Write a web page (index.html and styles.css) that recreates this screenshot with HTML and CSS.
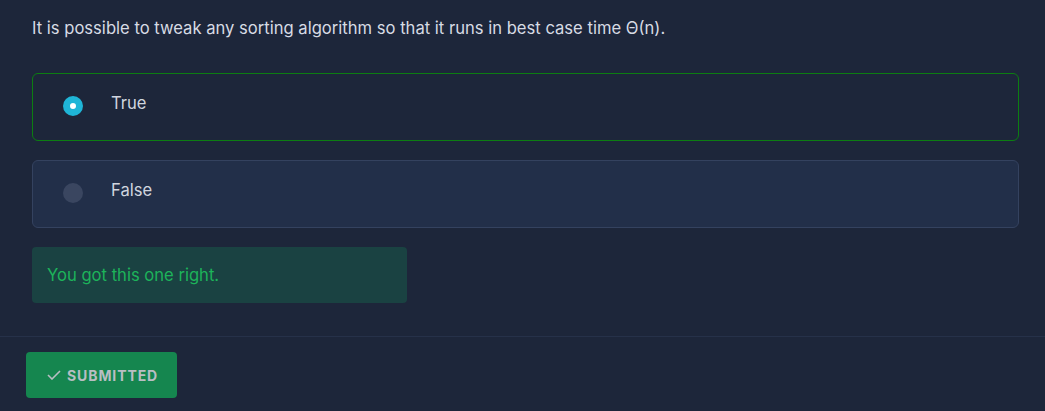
FILE: index.html
```html
<!DOCTYPE html>
<html>
<head>
<meta charset="utf-8">
<link rel="stylesheet" href="styles.css">
</head>
<body>
<div class="question">
  <p class="prompt">It is possible to tweak any sorting algorithm so that it runs in best case time Θ(n).</p>
  <div class="options">
    <label class="option option-correct">
      <span class="radio radio-on"></span>
      <span class="label">True</span>
    </label>
    <label class="option option-idle">
      <span class="radio radio-off"></span>
      <span class="label">False</span>
    </label>
  </div>
  <div class="feedback">You got this one right.</div>
</div>
<div class="footer">
  <button class="submit">
    <svg class="check" width="14" height="10" viewBox="0 0 14 10"><path d="M1 5 L5 9 L13 1" fill="none" stroke="currentColor" stroke-width="1.6"/></svg>
    <span>SUBMITTED</span>
  </button>
</div>
</body>
</html>
```
FILE: styles.css
```css
html, body {
  margin: 0;
  padding: 0;
  background: #1d263a;
  height: 100%;
}
body {
  font-family: Inter, "Noto Sans", sans-serif;
  color: #d5d9e2;
}
.question {
  padding: 16px 26px 33px 32px;
}
.prompt {
  margin: 0 0 33px 0;
  font-size: 16.6px;
  line-height: 24px;
  color: #d7dbe4;
}
.options {
  display: flex;
  flex-direction: column;
  gap: 19px;
}
.option {
  display: flex;
  align-items: center;
  height: 68px;
  box-sizing: border-box;
  border-radius: 6px;
  padding-left: 30px;
}
.option-correct {
  border: 1px solid #0c7d12;
  background: #1d263a;
}
.option-idle {
  border: 1px solid #34425f;
  background: #222f49;
}
.radio {
  width: 20px;
  height: 20px;
  border-radius: 50%;
  box-sizing: border-box;
  margin-right: 28px;
  margin-top: -2px;
}
.radio-on {
  border: 7px solid #1fb5d7;
  background: #ffffff;
}
.radio-off {
  background: #3a4660;
}
.label {
  font-size: 16.6px;
  color: #d0d5df;
  margin-bottom: 9px;
}
.feedback {
  margin-top: 19px;
  width: 375px;
  height: 56px;
  box-sizing: border-box;
  background: #1a4242;
  border-radius: 4px;
  color: #1db35a;
  font-size: 16.6px;
  display: flex;
  align-items: center;
  padding-left: 15px;
}
.footer {
  border-top: 1px solid #263149;
  padding: 15px 26px;
}
.submit {
  display: flex;
  align-items: center;
  gap: 6px;
  height: 46px;
  width: 151px;
  box-sizing: border-box;
  padding: 0 0 0 21px;
  border: none;
  border-radius: 4px;
  background: #15864f;
  color: #b9bec3;
  font-family: Inter, "Noto Sans", sans-serif;
  font-weight: 700;
  font-size: 14px;
  letter-spacing: 0.9px;
}
.check {
  color: #b9bec3;
}
```
